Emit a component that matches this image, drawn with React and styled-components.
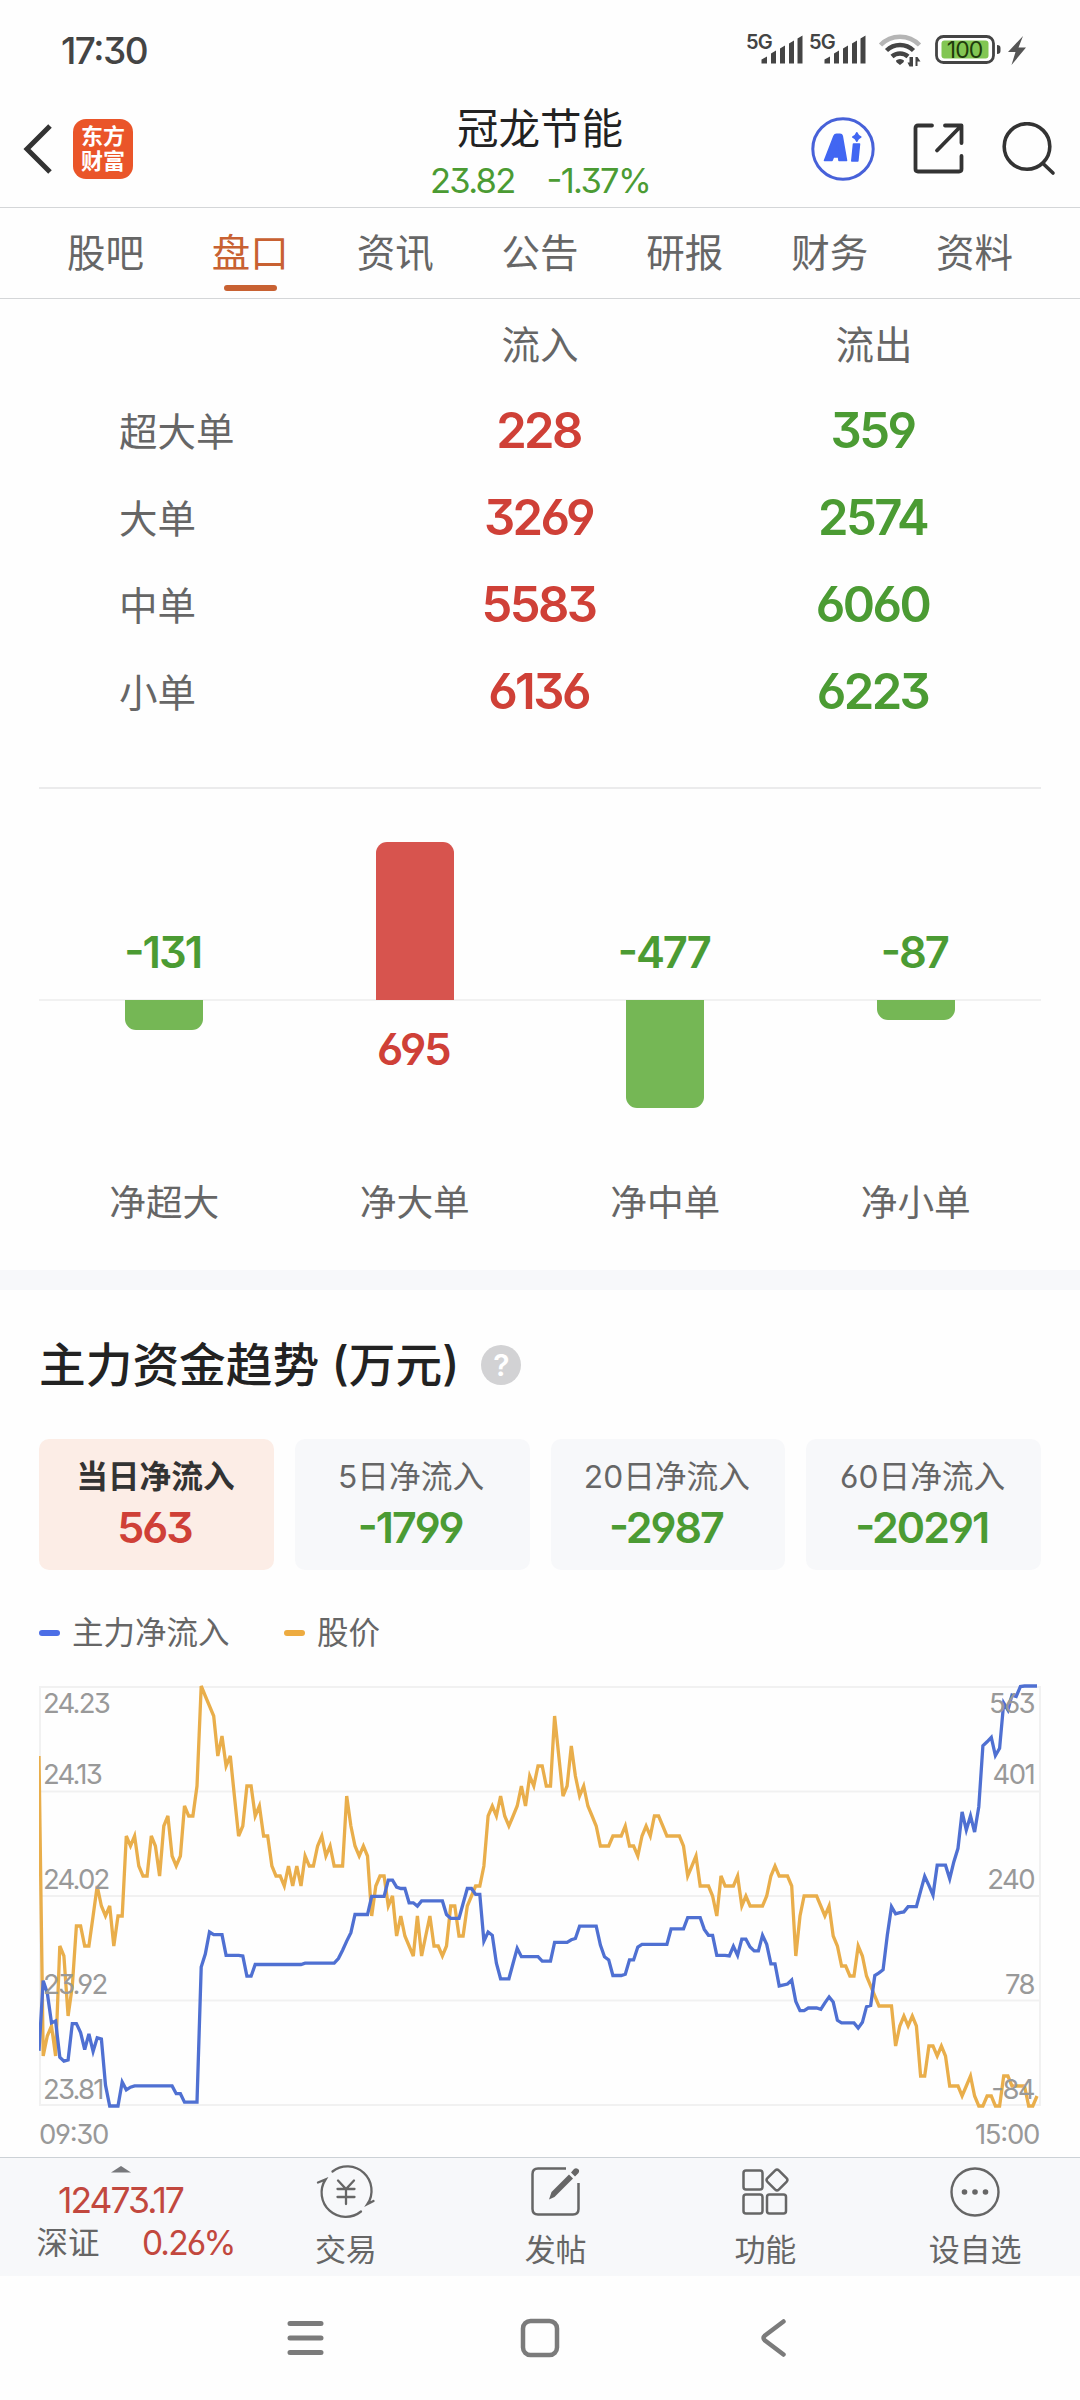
import React from 'react';
import styled, { createGlobalStyle } from 'styled-components';

const RED = '#cf4037';
const GREEN = '#4b9b33';

const GlobalStyle = createGlobalStyle`
  * {
    box-sizing: border-box;
  }

  body {
    margin: 0;
    background: #fefefe;
    font-family: Inter, "Noto Sans CJK SC", sans-serif;
    font-feature-settings: "cv03", "cv04", "cv09", "case";
    color: #666;
  }

  svg {
    display: block;
  }
`;

const Screen = styled.div`
  display: flex;
  flex-direction: column;
  width: 1080px;
  height: 2400px;
  overflow: hidden;
`;

/* status bar */

const StatusBar = styled.div`
  display: flex;
  justify-content: space-between;
  align-items: center;
  height: 90px;
  padding: 10px 54px 0 61px;
`;

const Clock = styled.div`
  font-size: 37px;
  font-weight: 500;
  letter-spacing: -1.5px;
  color: #444;
`;

const SvgText = styled.text`
  font-family: Inter, "Noto Sans CJK SC", sans-serif;
  font-size: ${({ $size }) => $size}px;
  font-weight: ${({ $weight }) => $weight || 400};
  letter-spacing: ${({ $spacing }) => $spacing || 0}px;
`;

/* header */

const Header = styled.header`
  display: grid;
  grid-template-columns: 1fr 320px 1fr;
  height: 118px;
  border-bottom: 1px solid #d4d6d8;
`;

const HeaderLeft = styled.div`
  display: flex;
  align-items: center;
  gap: 21px;
  padding-left: 22px;
`;

const Logo = styled.div`
  display: flex;
  flex-direction: column;
  align-items: center;
  justify-content: center;
  width: 60px;
  height: 60px;
  border-radius: 13px;
  background: #ea5529;
  color: #fff;
  font-size: 22px;
  font-weight: 700;
  line-height: 25px;
`;

const HeaderTitle = styled.div`
  display: flex;
  flex-direction: column;
  align-items: center;
  padding-top: 14px;
`;

const StockName = styled.div`
  font-size: 41.5px;
  line-height: 50px;
  color: #222;
`;

const Quote = styled.div`
  display: flex;
  gap: 32px;
  padding-top: 1px;
  font-size: 34.5px;
  line-height: 52px;
  letter-spacing: -1.7px;
  color: ${GREEN};
`;

const HeaderRight = styled.div`
  display: flex;
  align-items: center;
  justify-content: flex-end;
  gap: 37.5px;
  padding-right: 24px;
`;

/* tabs */

const Tabs = styled.nav`
  display: grid;
  grid-template-columns: repeat(7, 1fr);
  height: 91px;
  padding: 0 33px;
  border-bottom: 1px solid #d4d6d8;
`;

const Tab = styled.div`
  display: flex;
  flex-direction: column;
  align-items: center;
  padding-top: 17px;
  font-size: 38.5px;
  line-height: 56px;
  color: ${({ $active }) => ($active ? '#c86132' : '#666')};

  &::after {
    content: '';
    width: 53px;
    height: 6px;
    margin-top: 4px;
    border-radius: 3px;
    background: ${({ $active }) => ($active ? '#c86132' : 'transparent')};
  }
`;

/* order flow table */

const FlowTable = styled.section`
  display: flex;
  flex-direction: column;
  height: 490px;
  margin: 0 39px;
  padding-top: 1px;
  border-bottom: 2px solid #ebebec;
`;

const FlowRow = styled.div`
  display: grid;
  grid-template-columns: 334px 334px 334px;
  align-items: center;
  height: 87px;
  font-size: 38.5px;
  line-height: 56px;
  text-align: center;
`;

const FlowHead = styled.div`
  padding-top: 2px;
`;

const FlowLabel = styled.div`
  padding: 2px 0 0 80px;
  text-align: left;
`;

const FlowValue = styled.div`
  padding-right: 3px;
  font-size: 49px;
  font-weight: 560;
  letter-spacing: -2.6px;
  color: ${({ $color }) => $color};
`;

/* net inflow bars */

const NetChart = styled.section`
  height: 481px;
  padding: 0 39px;
`;

const BarHalf = styled.div`
  display: grid;
  grid-template-columns: repeat(4, 1fr);
  justify-items: center;
  align-items: ${({ $up }) => ($up ? 'end' : 'start')};
  height: ${({ $up }) => ($up ? '211px' : '161px')};
  box-shadow: ${({ $up }) => ($up ? 'inset 0 -1px #f1f1f1, 0 1px #f1f1f1' : 'none')};
`;

const Bar = styled.div`
  position: relative;
  width: 78px;
  border-radius: ${({ $up }) => ($up ? '11px 11px 0 0' : '0 0 11px 11px')};
  background: ${({ $up }) => ($up ? '#d7544e' : '#75b755')};
`;

const BarValue = styled.div`
  padding: ${({ $up }) => ($up ? '24px 3px 0 0' : '0 3px 23px 0')};
  font-size: 43.5px;
  font-weight: 560;
  line-height: 50px;
  letter-spacing: -2px;
  color: ${({ $up }) => ($up ? RED : GREEN)};
`;

const BarNames = styled.div`
  display: grid;
  grid-template-columns: repeat(4, 1fr);
  padding-top: 14px;
  font-size: 36.7px;
  line-height: 56px;
  text-align: center;
`;

const Separator = styled.div`
  height: 20px;
  background: #f7f8fa;
`;

/* trend section */

const Trend = styled.section`
  height: 867px;
  padding: 0 39px;
`;

const TrendTitle = styled.h2`
  display: flex;
  align-items: center;
  height: 149px;
  margin: 0;
  font-size: 46.7px;
  font-weight: 500;
  line-height: 60px;
  color: #222;
`;

const Help = styled.span`
  display: flex;
  align-items: center;
  justify-content: center;
  width: 40px;
  height: 40px;
  margin-left: 22px;
  border-radius: 50%;
  background: #d2d2d4;
  color: #fff;
  font-size: 30px;
  font-weight: 600;
`;

const Cards = styled.div`
  display: grid;
  grid-template-columns: repeat(4, 1fr);
  gap: 21px;
`;

const Card = styled.div`
  display: flex;
  flex-direction: column;
  align-items: center;
  height: 131px;
  padding: 12px 2px 0 0;
  border-radius: 10px;
  background: ${({ $active }) => ($active ? '#fcede6' : '#f7f8fa')};
`;

const CardLabel = styled.div`
  font-size: 31.7px;
  font-weight: ${({ $active }) => ($active ? 600 : 400)};
  line-height: 51px;
  color: ${({ $active }) => ($active ? '#333' : '#666')};
`;

const CardValue = styled.div`
  padding-right: 2px;
  font-size: 43px;
  font-weight: 560;
  line-height: 50px;
  letter-spacing: -2px;
  color: ${({ $color }) => $color};
`;

const Legend = styled.div`
  display: flex;
  align-items: center;
  height: 114px;
  padding-top: 12px;
  font-size: 31.5px;
  line-height: 44px;
`;

const LegendItem = styled.div`
  display: flex;
  align-items: center;
  gap: 12px;
  width: 245px;

  &::before {
    content: '';
    width: 21px;
    height: 6px;
    border-radius: 3px;
    background: ${({ $color }) => $color};
  }
`;

const Times = styled.div`
  display: flex;
  justify-content: space-between;
  padding: 4px 2px 0 0;
  font-size: 27.5px;
  line-height: 44px;
  letter-spacing: -1.3px;
  color: #999;
`;

/* bottom toolbar */

const Toolbar = styled.footer`
  display: grid;
  grid-template-columns: 241px repeat(4, 1fr);
  height: 119px;
  border-top: 1px solid #ccd1d6;
  background: #f7f8fa;
`;

const IndexBox = styled.div`
  display: flex;
  flex-direction: column;
  align-items: center;
  padding-top: 8px;
`;

const IndexValue = styled.div`
  margin-top: 8px;
  font-size: 35.5px;
  line-height: 40px;
  letter-spacing: -2px;
  color: #c2483e;
`;

const IndexRow = styled.div`
  display: flex;
  justify-content: space-between;
  width: 198px;
  margin-left: 30px;
  font-size: 31.5px;
  line-height: 44px;
`;

const IndexChange = styled.span`
  font-size: 33.5px;
  letter-spacing: -1.8px;
  color: #c2483e;
`;

const ToolItem = styled.div`
  display: flex;
  flex-direction: column;
  align-items: center;
  padding-top: 6px;
  font-size: 31px;
  line-height: 60px;
`;

const NavBar = styled.div`
  display: grid;
  grid-template-columns: 234px 234px 234px;
  justify-content: center;
  align-items: center;
  justify-items: center;
  height: 124px;
`;

const tabs = ['股吧', '盘口', '资讯', '公告', '研报', '财务', '资料'];

const flows = [
  ['超大单', 228, 359],
  ['大单', 3269, 2574],
  ['中单', 5583, 6060],
  ['小单', 6136, 6223],
];

const nets = [
  { name: '净超大', value: -131 },
  { name: '净大单', value: 695 },
  { name: '净中单', value: -477 },
  { name: '净小单', value: -87 },
];

const periods = [
  ['当日净流入', 563],
  ['5日净流入', -1799],
  ['20日净流入', -2987],
  ['60日净流入', -20291],
];

// price per minute, in cents
const prices = [
  2416, 2386, 2388, 2389, 2386, 2397, 2396, 2390, 2393, 2399, 2399, 2397, 2397, 2400, 2403, 2401,
  2400, 2401, 2397, 2400, 2400, 2408, 2407, 2408, 2405, 2404, 2404, 2408, 2407, 2404, 2409, 2410,
  2406, 2405, 2406, 2411, 2410, 2410, 2413, 2423, 2422, 2421, 2420, 2416, 2418, 2415, 2416, 2412,
  2408, 2409, 2413, 2413, 2410, 2411, 2408, 2408, 2405, 2404, 2404, 2403, 2405, 2403, 2405, 2403,
  2406, 2405, 2405, 2407, 2408, 2406, 2407, 2405, 2405, 2405, 2412, 2409, 2407, 2406, 2407, 2406,
  2400, 2403, 2404, 2404, 2401, 2402, 2398, 2400, 2398, 2397, 2396, 2400, 2396, 2398, 2400, 2397,
  2397, 2396, 2397, 2401, 2401, 2398, 2398, 2401, 2402, 2403, 2403, 2405, 2410, 2411, 2410, 2412,
  2410, 2409, 2410, 2411, 2413, 2411, 2414, 2413, 2415, 2415, 2413, 2413, 2420, 2416, 2412, 2413,
  2417, 2414, 2412, 2413, 2411, 2410, 2409, 2407, 2407, 2407, 2408, 2408, 2408, 2409, 2407, 2407,
  2406, 2408, 2409, 2408, 2410, 2410, 2409, 2408, 2408, 2408, 2408, 2407, 2404, 2405, 2406, 2403,
  2403, 2403, 2402, 2400, 2404, 2403, 2403, 2403, 2404, 2401, 2402, 2401, 2401, 2401, 2401, 2402,
  2404, 2405, 2404, 2404, 2404, 2403, 2396, 2400, 2402, 2402, 2402, 2402, 2401, 2400, 2401, 2398,
  2397, 2395, 2395, 2394, 2394, 2397, 2396, 2394, 2393, 2392, 2391, 2391, 2391, 2391, 2387, 2389,
  2390, 2389, 2390, 2389, 2384, 2384, 2387, 2387, 2386, 2387, 2386, 2383, 2383, 2383, 2382, 2383,
  2384, 2382, 2381, 2381, 2382, 2382, 2381, 2381, 2384, 2384, 2383, 2383, 2383, 2383, 2381, 2381,
  2382,
];

// [minute, net inflow], flat stretches only keep their ends
const inflows = [
  [0, 1], [1, 109], [2, 90], [3, 44], [4, 47], [5, -9], [6, -15], [7, -13], [8, 43], [9, 43],
  [10, 29], [11, 3], [12, 27], [13, 0], [14, 21], [15, 19], [16, -52], [17, -84], [19, -84],
  [20, -47], [21, -59], [22, -55], [23, -53], [32, -53], [33, -65], [34, -65], [35, -78],
  [38, -78], [39, 130], [40, 150], [41, 184], [42, 180], [44, 180], [45, 148], [48, 148],
  [49, 147], [50, 116], [51, 116], [52, 134], [63, 134], [64, 136], [71, 136], [72, 143],
  [73, 156], [74, 170], [75, 183], [76, 211], [79, 211], [80, 239], [83, 239], [84, 264],
  [85, 264], [86, 253], [87, 251], [88, 251], [89, 229], [90, 229], [91, 224], [92, 232],
  [97, 232], [98, 211], [99, 205], [101, 205], [102, 228], [103, 251], [104, 251], [105, 242],
  [106, 242], [107, 170], [108, 184], [109, 179], [110, 136], [111, 112], [113, 112], [114, 136],
  [115, 159], [116, 146], [120, 146], [121, 139], [123, 139], [124, 168], [127, 168], [128, 172],
  [129, 174], [130, 193], [134, 193], [135, 164], [136, 146], [137, 141], [138, 117], [140, 117],
  [141, 119], [142, 141], [143, 141], [144, 161], [145, 165], [151, 165], [152, 189], [155, 189],
  [156, 206], [159, 206], [160, 188], [161, 179], [162, 179], [163, 148], [165, 148], [166, 147],
  [167, 162], [168, 148], [169, 173], [170, 173], [171, 161], [172, 155], [173, 155], [174, 179],
  [175, 165], [176, 135], [177, 135], [178, 101], [180, 104], [181, 110], [182, 77], [183, 63],
  [184, 63], [185, 67], [187, 67], [188, 65], [189, 75], [190, 84], [191, 76], [192, 48],
  [193, 44], [196, 44], [197, 36], [198, 45], [199, 69], [200, 71], [201, 117], [202, 121],
  [203, 126], [204, 179], [205, 223], [206, 212], [207, 214], [208, 215], [209, 223], [211, 223],
  [212, 247], [213, 270], [214, 256], [215, 241], [216, 287], [218, 287], [219, 266], [220, 292],
  [221, 313], [222, 369], [223, 341], [224, 363], [225, 338], [226, 377], [227, 471], [228, 477],
  [229, 484], [230, 456], [231, 467], [232, 537], [233, 526], [234, 549], [235, 547], [236, 562],
  [237, 563], [240, 563],
];

const minuteX = (minute) => (minute * 998) / 240;
const priceLine = prices.map((p, i) => `${minuteX(i).toFixed(1)},${2 + (2423 - p) * 10}`).join(' ');
const inflowLine = inflows
  .map(([m, v]) => `${minuteX(m).toFixed(1)},${(2 + ((563 - v) / 647) * 420).toFixed(1)}`)
  .join(' ');

const axisLabels = [
  ['24.23', '563', 29],
  ['24.13', '401', 100],
  ['24.02', '240', 205],
  ['23.92', '78', 310],
  ['23.81', '-84', 414.5],
];

const Signal = ({ x }) => (
  <g transform={`translate(${x} 0)`} fill="#444">
    <SvgText x="0" y="16.500" $size={20} $weight={600} $spacing={-0.8}>5G</SvgText>
    <path d="M15.500 27.500l5.500-3v7h-5.500zM25 21.500l5-3v13h-5zM34 16.500l5-3v18h-5zM43 11.500l5-3v23h-5zM51.500 6.500l5-3v28h-5z" />
  </g>
);

const StatusIcons = () => (
  <svg width="280" height="52" viewBox="0 -8 280 52">
    <Signal x={0} />
    <Signal x={63} />
    <g fill="none" strokeWidth="4.500">
      <path d="M134.500 13a27 27 0 0 1 39 0" stroke="#b5b5b5" />
      <path d="M140.500 18.500a19.500 19.500 0 0 1 27 0" stroke="#444" />
      <path d="M146 24.500a12 12 0 0 1 16 0" stroke="#444" />
    </g>
    <path d="M150 28.500a6 6 0 0 1 8 0q.5 1.500-4 4.500-4.500-3-4-4.500zM165.500 25v9.500h-2l-2-4h2V25zM167 25v9.500h-1.500V25zM169.500 34V25h2l3 4.500h-3V34z" fill="#444" />
    <rect x="190.500" y="4.500" width="57" height="26" rx="7" fill="none" stroke="#444" strokeWidth="2.800" />
    <rect x="195.500" y="8.500" width="47" height="18" rx="3" fill="#82c653" />
    <path d="M251 13q3.500 0 3.500 3v3q0 3-3.500 3z" fill="#444" />
    <SvgText x="218.500" y="26" textAnchor="middle" fill="#1f3b0c" $size={23} $spacing={-1}>100</SvgText>
    <path d="M277 4l-15 16h7.500l-4 13L280 15.500h-7.500z" fill="#555" />
  </svg>
);

const BackIcon = () => (
  <svg width="30" height="50" viewBox="0 0 30 50" fill="none" stroke="#333" strokeWidth="5">
    <path d="M28 2L5 25l23 23" />
  </svg>
);

const AiIcon = () => (
  <svg width="64" height="64" viewBox="0 0 64 64">
    <circle cx="32" cy="32" r="30.200" fill="none" stroke="#4761d9" strokeWidth="3" />
    <g fill="#4166f2" stroke="#4166f2" strokeWidth="1.600" strokeLinejoin="round">
      <path fillRule="evenodd" d="M13.500 43.500L23 19q.8-1.800 2.500-1.800h3.500q1.800 0 2.200 1.800l4.300 24.500h-7.500l-.5-3.500h-5l-1.500 3.500zM25.500 32.500h1.200l-.2-3.500z" />
      <path d="M42.500 27h6l-1.700 17h-6z" />
      <path d="M45.800 15.800q1 3 4 4.200-3 1.200-4 4.200-1-3-4-4.200 3-1.200 4-4.200z" />
    </g>
  </svg>
);

const ShareIcon = () => (
  <svg width="52" height="52" viewBox="0 0 52 52" fill="none" stroke="#333" strokeWidth="3.800" strokeLinecap="round" strokeLinejoin="round">
    <path d="M19 2.500H5q-2.500 0-2.500 2.500v41q0 2.500 2.500 2.500h41q2.500 0 2.500-2.500V33M32 2.500h16.500V20M48 3L24 27.500" />
  </svg>
);

const SearchIcon = () => (
  <svg width="54" height="54" viewBox="0 0 54 54" fill="none" stroke="#333" strokeWidth="3.600" strokeLinecap="round">
    <circle cx="25" cy="24.500" r="22.800" />
    <path d="M41 41.500L51 51" />
  </svg>
);

const TradeIcon = () => (
  <svg width="60" height="56" viewBox="0 0 60 56" fill="none" stroke="#666" strokeWidth="2.300" strokeLinecap="round">
    <path d="M16.500 7.500A24.200 24.200 0 0 1 51.500 40L57.500 37" />
    <path d="M45 47.500A24.200 24.200 0 0 1 9.500 15.500L2 18.500" />
    <path d="M22 16.500l8 8.500 8-8.500M21.500 25h17M21.500 33h17M30 25v15" />
  </svg>
);

const PostIcon = () => (
  <svg width="52" height="56" viewBox="0 0 52 56" fill="none" stroke="#666" strokeWidth="2.500">
    <path d="M36 4.500H8q-5.500 0-5.500 5.500v35q0 5.500 5.500 5.500h35q5.500 0 5.500-5.500V19" />
    <path d="M19 35.500l2.500-7.500L39 10.500l4 4L24.500 33zM41 8.500l3-3.500q2-1.500 4 0t.5 4L45 12.500z" fill="#666" stroke="none" />
  </svg>
);

const GridIcon = () => (
  <svg width="48" height="56" viewBox="0 0 48 56" fill="none" stroke="#666" strokeWidth="2.500">
    <rect x="2.500" y="6.500" width="19" height="19" rx="2.500" />
    <rect x="2.500" y="30.500" width="19" height="19" rx="2.500" />
    <rect x="26" y="30.500" width="19" height="19" rx="2.500" />
    <rect x="28" y="8" width="16" height="16" rx="2.500" transform="rotate(45 36 16)" />
  </svg>
);

const MoreIcon = () => (
  <svg width="52" height="56" viewBox="0 0 52 56" fill="#666">
    <circle cx="26" cy="28" r="23.500" fill="none" stroke="#666" strokeWidth="2.400" />
    <circle cx="15.500" cy="28" r="2.800" />
    <circle cx="26" cy="28" r="2.800" />
    <circle cx="36.500" cy="28" r="2.800" />
  </svg>
);

const tools = [
  ['交易', TradeIcon],
  ['发帖', PostIcon],
  ['功能', GridIcon],
  ['设自选', MoreIcon],
];

const TrendChart = () => (
  <svg width="1002" height="424" viewBox="0 0 1002 424">
    <path
      d="M1 3H1001M1 107.500H1001M1 212H1001M1 316.500H1001M1 421H1001M1 2V422M1001 2V422"
      fill="none"
      stroke="#f1f1f1"
      strokeWidth="2"
    />
    <polyline points={priceLine} fill="none" stroke="#e9ae4b" strokeWidth="3.300" />
    <polyline points={inflowLine} fill="none" stroke="#4f70d2" strokeWidth="3.300" />
    {axisLabels.map(([price, inflow, y]) => (
      <g key={price} fill="#999">
        <SvgText x="4" y={y} $size={27.5} $spacing={-1.8}>{price}</SvgText>
        <SvgText x="995" y={y} textAnchor="end" $size={27.5} $spacing={-1.6}>{inflow}</SvgText>
      </g>
    ))}
  </svg>
);

const BarValues = ({ item }) => (
  <BarValue $up={item.value > 0}>{item.value}</BarValue>
);

const BarShape = ({ item }) => (
  <Bar $up={item.value > 0} style={{ height: Math.round(Math.abs(item.value) * 0.2274) }} />
);

const App = () => (
  <Screen>
    <GlobalStyle />
    <StatusBar>
      <Clock>17:30</Clock>
      <StatusIcons />
    </StatusBar>

    <Header>
      <HeaderLeft>
        <BackIcon />
        <Logo>
          <span>东方</span>
          <span>财富</span>
        </Logo>
      </HeaderLeft>
      <HeaderTitle>
        <StockName>冠龙节能</StockName>
        <Quote>
          <span>23.82</span>
          <span>-1.37%</span>
        </Quote>
      </HeaderTitle>
      <HeaderRight>
        <AiIcon />
        <ShareIcon />
        <SearchIcon />
      </HeaderRight>
    </Header>

    <Tabs>
      {tabs.map((tab) => (
        <Tab key={tab} $active={tab === '盘口'}>{tab}</Tab>
      ))}
    </Tabs>

    <FlowTable>
      <FlowRow>
        <span />
        <FlowHead>流入</FlowHead>
        <FlowHead>流出</FlowHead>
      </FlowRow>
      {flows.map(([label, inflow, outflow]) => (
        <FlowRow key={label}>
          <FlowLabel>{label}</FlowLabel>
          <FlowValue $color={RED}>{inflow}</FlowValue>
          <FlowValue $color={GREEN}>{outflow}</FlowValue>
        </FlowRow>
      ))}
    </FlowTable>

    <NetChart>
      <BarHalf $up>
        {nets.map((item) => (item.value > 0
          ? <BarShape key={item.name} item={item} />
          : <BarValues key={item.name} item={item} />))}
      </BarHalf>
      <BarHalf>
        {nets.map((item) => (item.value > 0
          ? <BarValues key={item.name} item={item} />
          : <BarShape key={item.name} item={item} />))}
      </BarHalf>
      <BarNames>
        {nets.map(({ name }) => <span key={name}>{name}</span>)}
      </BarNames>
    </NetChart>

    <Separator />

    <Trend>
      <TrendTitle>
        主力资金趋势 (万元)
        <Help>?</Help>
      </TrendTitle>
      <Cards>
        {periods.map(([label, value], i) => (
          <Card key={label} $active={i === 0}>
            <CardLabel $active={i === 0}>{label}</CardLabel>
            <CardValue $color={value > 0 ? RED : GREEN}>{value}</CardValue>
          </Card>
        ))}
      </Cards>
      <Legend>
        <LegendItem $color="#4c6ee6">主力净流入</LegendItem>
        <LegendItem $color="#edab40">股价</LegendItem>
      </Legend>
      <TrendChart />
      <Times>
        <span>09:30</span>
        <span>15:00</span>
      </Times>
    </Trend>

    <Toolbar>
      <IndexBox>
        <svg width="20" height="7" viewBox="0 0 20 7" fill="#77787c">
          <path d="M0 6.500L10 0l10 6.500z" />
        </svg>
        <IndexValue>12473.17</IndexValue>
        <IndexRow>
          <span>深证</span>
          <IndexChange>0.26%</IndexChange>
        </IndexRow>
      </IndexBox>
      {tools.map(([label, Icon]) => (
        <ToolItem key={label}>
          <Icon />
          {label}
        </ToolItem>
      ))}
    </Toolbar>

    <NavBar>
      <svg width="40" height="40" viewBox="0 0 40 40" stroke="#7b7b7b" strokeWidth="5" strokeLinecap="round">
        <path d="M4 5.500h31M4 20h31M4 34.500h31" />
      </svg>
      <svg width="40" height="40" viewBox="0 0 40 40" fill="none" stroke="#7b7b7b" strokeWidth="4.500">
        <rect x="3" y="3" width="34" height="34" rx="7.500" />
      </svg>
      <svg width="40" height="40" viewBox="0 0 40 40" fill="none" stroke="#7b7b7b" strokeWidth="4.500" strokeLinecap="round">
        <path d="M29.500 3.500L11 17.500q-3 2.500 0 5l18.500 14" />
      </svg>
    </NavBar>
  </Screen>
);

export default App;
